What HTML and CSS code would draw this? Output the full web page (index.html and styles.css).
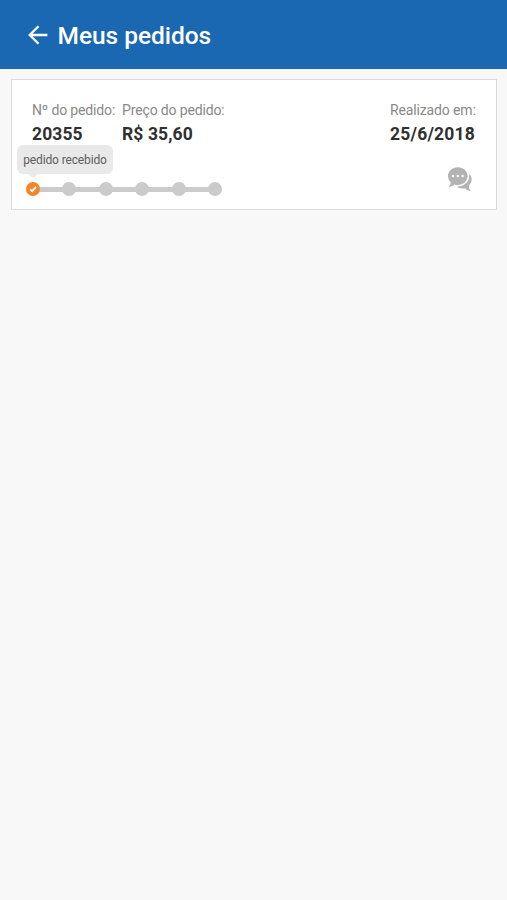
FILE: index.html
```html
<!DOCTYPE html>
<html lang="pt-BR">
<head>
<meta charset="utf-8">
<title>Meus pedidos</title>
<link rel="stylesheet" href="styles.css">
</head>
<body>
<header class="topbar">
  <svg class="back" viewBox="0 0 20 20" width="20" height="20"><path d="M19.4 10H2M10.5 1.2L1.7 10L10.5 18.8"/></svg>
  <h1 class="title">Meus pedidos</h1>
</header>
<main class="list">
  <article class="order">
    <div class="fields">
      <div class="field number"><span class="label">Nº do pedido:</span><strong class="value">20355</strong></div>
      <div class="field price"><span class="label">Preço do pedido:</span><strong class="value">R$ 35,60</strong></div>
      <div class="field date"><span class="label">Realizado em:</span><strong class="value">25/6/2018</strong></div>
    </div>
    <div class="status">
      <div class="track">
        <span class="step done"><svg viewBox="0 0 14 14" width="14" height="14"><path d="M4.1 7.4L6.2 9.2L10 4.9"/></svg></span>
        <span class="step"></span>
        <span class="step"></span>
        <span class="step"></span>
        <span class="step"></span>
        <span class="step"></span>
        <span class="tip">pedido recebido</span>
      </div>
      <svg class="chat" viewBox="0 0 24 25" width="24" height="25">
        <path d="M21.2 6.5C24.2 9.5 24.7 15 21.1 18.2C20.5 19.6 21.2 22.2 22.5 23.4C22.7 24 22 24.2 21.5 24C19.4 23.4 18.2 22.6 17.2 21.3C13.8 22.1 10.4 21.3 8.5 19.6C15.8 20 22.3 15 21.2 6.5Z"/>
        <path d="M9.8.3C15.2.3 19.6 4.1 19.6 9.1C19.6 14.1 15.2 18.1 9.8 18.1C8.6 18.1 7.5 17.9 6.4 17.5C5.1 18.9 3.3 19.6 1.3 19.9C.7 19.9.8 19.4 1.2 19C2.2 18 2.8 16.7 2.8 15.3C1 13.8 0 11.5 0 9.1C0 4.1 4.4.3 9.8.3Z"/>
        <g class="dots"><circle cx="5" cy="9" r="1.2"/><circle cx="9.8" cy="9" r="1.2"/><circle cx="14.6" cy="9" r="1.2"/></g>
      </svg>
    </div>
  </article>
</main>
</body>
</html>
```
FILE: styles.css
```css
* { box-sizing: border-box; }
body { margin: 0; min-height: 900px; background: #f8f8f8; font-family: Roboto, sans-serif; }
.topbar { height: 69px; padding: 3px 28px 0; display: flex; align-items: center; gap: 9.5px; background: #1a68b1; color: #fff; }
.back { flex: none; margin-top: -2px; fill: none; stroke: #fff; stroke-width: 2.3; }
.title { margin: 0; font-size: 24.5px; line-height: 28px; font-weight: 500; letter-spacing: -.04px; }
.list { border-top: 1px solid #eaf4fa; padding: 9px 10px 0 11px; }
.order { height: 131px; padding: 21px 19px 0 20px; background: #fff; border: 1px solid #dadbdc; }
.fields { display: flex; }
.field { display: flex; flex-direction: column; white-space: nowrap; }
.number { width: 90px; }
.date { width: 87px; margin-left: auto; }
.label { font-size: 14px; line-height: 19px; letter-spacing: -.14px; color: #898989; }
.value { font-size: 17.5px; line-height: 20px; margin-top: 4px; letter-spacing: .1px; font-weight: 700; color: #303030; }
.date .value { letter-spacing: .2px; }
.status { display: flex; justify-content: space-between; align-items: flex-start; }
.track { position: relative; width: 196px; height: 14px; margin: 38px 0 0 -6px; display: flex; justify-content: space-between; background: linear-gradient(#cbcbcb, #cbcbcb) 7px 4.5px / 182px 5px no-repeat; }
.step { width: 14px; height: 14px; border-radius: 50%; background: #cbcbcb; }
.done { background: #f68427; }
.done svg { display: block; fill: none; stroke: #fff; stroke-width: 1.8; }
.tip { position: absolute; left: -9px; top: -37px; width: 96px; height: 29px; border-radius: 6px; background: #e9e9e9; color: #5e5e5e; font-size: 12px; letter-spacing: -.13px; line-height: 31px; text-align: center; white-space: nowrap; }
.tip::after { content: ""; position: absolute; left: 11px; top: 29px; border: 5px solid transparent; border-top: 4px solid #e9e9e9; border-bottom: 0; }
.chat { margin: 23px 5.5px 0 0; fill: #b3b3b3; }
.dots { fill: #fff; }
```
